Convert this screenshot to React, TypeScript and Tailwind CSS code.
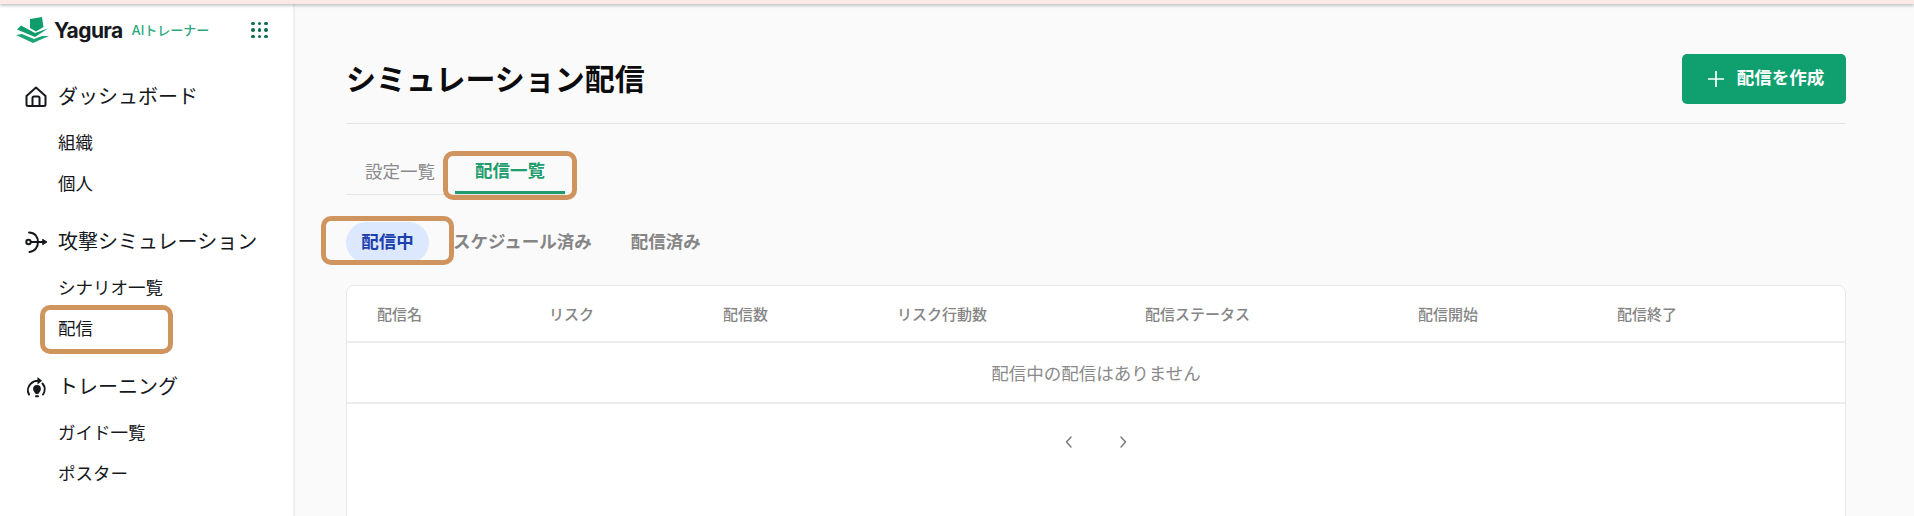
const jp = "font-['Inter','Noto_Sans_CJK_JP',sans-serif]";

function Logo() {
  return (
    <svg width="35" height="28" viewBox="0 0 35 28" className="shrink-0">
      <path d="M15 3 L27 1 L28.5 11 L21 15.5 L15 12 Z" fill="#0f9d6b" />
      <path d="M6 9.5 L20 17 L33 12.5 L20 21 L2 13.5 Z" fill="#0f9d6b" />
      <path d="M1 19 L7 18 L19 23 L27 20 L34 20 L18 27 Z" fill="#1aa676" />
    </svg>
  );
}

function GridDots() {
  const dots = [0, 1, 2, 3, 4, 5, 6, 7, 8];
  return (
    <div className="grid grid-cols-3 gap-[3px]">
      {dots.map((d) => (
        <span key={d} className="h-[3.5px] w-[3.5px] rounded-full bg-[#0f6b4d]" />
      ))}
    </div>
  );
}

function HomeIcon() {
  return (
    <svg width="22" height="22" viewBox="0 0 22 22" fill="none" stroke="#16181d" strokeWidth="2" strokeLinejoin="round">
      <path d="M1.5 10 L11 1.5 L20.5 10 V18.5 A1.5 1.5 0 0 1 19 20 H3 A1.5 1.5 0 0 1 1.5 18.5 Z" />
      <path d="M7.5 20 V12 Q7.5 10.5 9 10.5 H13 Q14.5 10.5 14.5 12 V20" />
    </svg>
  );
}

function AttackIcon() {
  return (
    <svg width="24" height="22" viewBox="0 0 24 22" fill="none" stroke="#16181d" strokeWidth="2" strokeLinecap="round" strokeLinejoin="round">
      <circle cx="3.5" cy="11" r="2.2" />
      <path d="M6 11 H19" />
      <path d="M18 8.5 L22 11 L18 13.5 Z" fill="#16181d" strokeWidth="1" />
      <path d="M4 1.5 C10 1.5 13 6 13 11 C13 16 10 20.5 4.5 21" />
    </svg>
  );
}

function TrainingIcon() {
  return (
    <svg width="22" height="22" viewBox="0 0 22 22" fill="none" stroke="#16181d" strokeWidth="2" strokeLinecap="round" strokeLinejoin="round">
      <path d="M4 18.5 A9 9 0 0 1 6 7.5 C8 5.5 10 4.8 13 4.8" />
      <path d="M12.5 1 L17 4.8 L12.5 8.5 Z" fill="#16181d" stroke="none" />
      <path d="M17.5 7.5 A9 9 0 0 1 18 18.5" />
      <path d="M12 9 A3.9 3.9 0 0 1 15.9 12.9 C15.9 15 14 16.5 13.3 18 H10.7 C10 16.5 8.1 15 8.1 12.9 A3.9 3.9 0 0 1 12 9 Z" fill="#16181d" stroke="none" />
      <path d="M11 20.3 H13" />
    </svg>
  );
}

function Mark({ className }: { className: string }) {
  return <div className={`pointer-events-none absolute rounded-[10px] border-[5px] border-[#d0955f] ${className}`} />;
}

const navGroups = [
  { icon: <HomeIcon />, label: "ダッシュボード", items: ["組織", "個人"] },
  { icon: <AttackIcon />, label: "攻撃シミュレーション", items: ["シナリオ一覧", "配信"] },
  { icon: <TrainingIcon />, label: "トレーニング", items: ["ガイド一覧", "ポスター"] },
];

function Sidebar() {
  return (
    <aside className="w-[295px] shrink-0 border-r-2 border-[#efefef] bg-white">
      <div className="flex h-[52px] items-center pl-[15px]">
        <Logo />
        <span className="ml-[4px] text-[21px] leading-none font-bold tracking-[-0.6px] text-[#16181d]">Yagura</span>
        <span className="ml-[9px] text-[13px] leading-none font-medium text-[#2aa87c]">AIトレーナー</span>
        <div className="ml-[42px]">
          <GridDots />
        </div>
      </div>
      <nav className="mt-[14px] flex flex-col gap-[10px] pl-[25px]">
        {navGroups.map((g) => (
          <div key={g.label}>
            <div className="flex h-[53px] items-center">
              <span className="flex w-[33px] shrink-0 items-center">{g.icon}</span>
              <span className="text-[20px] text-[#16181d]">{g.label}</span>
            </div>
            <ul>
              {g.items.map((item) => (
                <li key={item} className="relative flex h-[41px] items-center pl-[33px] text-[17.5px] text-[#16181d]">
                  {item}
                  {item === "配信" && <Mark className="left-[15px] top-[-4px] h-[49px] w-[133px]" />}
                </li>
              ))}
            </ul>
          </div>
        ))}
      </nav>
    </aside>
  );
}

const columns = ["配信名", "リスク", "配信数", "リスク行動数", "配信ステータス", "配信開始", "配信終了"];

function DeliveryTable() {
  return (
    <div className="mt-[22px] h-[300px] rounded-t-[8px] border border-[#e8e8e8] bg-white">
      <div className="grid h-[57px] grid-cols-[172px_174px_174px_248px_273px_199px_1fr] items-center border-b-2 border-[#ececec] pt-[3px] pl-[30px] text-[15px] font-medium text-[#858585]">
        {columns.map((c) => (
          <span key={c}>{c}</span>
        ))}
      </div>
      <div className="flex h-[61px] items-center justify-center border-b-2 border-[#ececec] pt-[3px] text-[17.5px] text-[#8a8a8a]">
        配信中の配信はありません
      </div>
      <div className="flex h-[76px] items-center justify-center gap-[38px]">
        <svg width="16" height="16" viewBox="0 0 16 16" fill="none" stroke="#777777" strokeWidth="1.4" strokeLinecap="round" strokeLinejoin="round">
          <path d="M10 3 L5.5 8 L10 13" />
        </svg>
        <svg width="16" height="16" viewBox="0 0 16 16" fill="none" stroke="#777777" strokeWidth="1.4" strokeLinecap="round" strokeLinejoin="round">
          <path d="M6 3 L10.5 8 L6 13" />
        </svg>
      </div>
    </div>
  );
}

function Main() {
  return (
    <main className="flex-1 bg-[#fafafa] pl-[51px] pr-[68px]">
      <div className="flex h-[120px] items-center justify-between border-b border-[#e5e5e5] pt-[30px]">
        <h1 className="text-[30px] leading-none font-bold text-[#0c0c0e]">シミュレーション配信</h1>
        <button className="flex h-[50px] w-[164px] items-center justify-center gap-[12px] rounded-[5px] bg-[#10a070] pl-[3px] text-[17.5px] font-bold text-white">
          <svg width="18" height="18" viewBox="0 0 18 18" fill="none" stroke="white" strokeWidth="1.7">
            <path d="M9 1 V17 M1 9 H17" />
          </svg>
          配信を作成
        </button>
      </div>

      <div className="mt-[23px] inline-flex h-[48px] border-b border-[#e5e5e5] text-[17.5px]">
        <span className="flex items-center pt-[3px] pl-[19px] pr-[20px] text-[#8a8a8a]">設定一覧</span>
        <span className="relative flex w-[110px] items-center justify-center border-b-[3px] border-[#1f9d6e] pt-[5px] font-bold text-[#1f9d6e]">
          配信一覧
          <Mark className="left-[-12px] top-[4px] h-[49px] w-[134px]" />
        </span>
      </div>

      <div className="mt-[27px] flex h-[41px] items-center text-[17.5px] font-bold text-[#858585]">
        <span className="relative flex h-[41px] w-[83px] items-center justify-center rounded-full bg-[#dbe8fd] text-[#1e40af]">
          配信中
          <Mark className="left-[-25px] top-[-6px] h-[49px] w-[133px]" />
        </span>
        <span className="ml-[24px]">スケジュール済み</span>
        <span className="ml-[39px]">配信済み</span>
      </div>

      <DeliveryTable />
    </main>
  );
}

export default function App() {
  return (
    <div className={`flex h-[516px] w-[1914px] flex-col overflow-hidden bg-white ${jp}`}>
      <div className="relative z-10 h-[4px] shrink-0 bg-[#fbe9e7] shadow-[0_2px_3px_rgba(0,0,0,0.22)]" />
      <div className="flex min-h-0 flex-1">
        <Sidebar />
        <Main />
      </div>
    </div>
  );
}
